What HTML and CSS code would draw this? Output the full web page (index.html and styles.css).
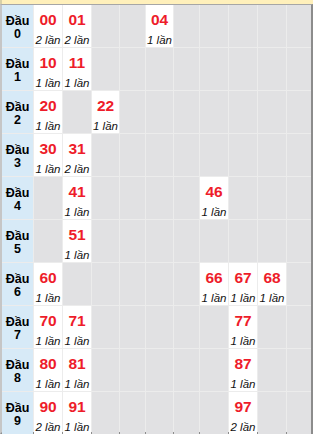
FILE: index.html
```html
<!DOCTYPE html>
<html lang="vi">
<head>
<meta charset="utf-8">
<title>Đầu lô</title>
<link rel="stylesheet" href="styles.css">
</head>
<body>
<div class="strip"></div>
<div class="board">
  <div class="h"><span>Đầu</span><span>0</span></div>
  <div class="c f"><b>00</b><i>2 lần</i></div><div class="c f"><b>01</b><i>2 lần</i></div><div class="c"></div><div class="c"></div><div class="c f"><b>04</b><i>1 lần</i></div><div class="c"></div><div class="c"></div><div class="c"></div><div class="c"></div><div class="c"></div>

  <div class="h"><span>Đầu</span><span>1</span></div>
  <div class="c f"><b>10</b><i>1 lần</i></div><div class="c f"><b>11</b><i>1 lần</i></div><div class="c"></div><div class="c"></div><div class="c"></div><div class="c"></div><div class="c"></div><div class="c"></div><div class="c"></div><div class="c"></div>

  <div class="h"><span>Đầu</span><span>2</span></div>
  <div class="c f"><b>20</b><i>1 lần</i></div><div class="c"></div><div class="c f"><b>22</b><i>1 lần</i></div><div class="c"></div><div class="c"></div><div class="c"></div><div class="c"></div><div class="c"></div><div class="c"></div><div class="c"></div>

  <div class="h"><span>Đầu</span><span>3</span></div>
  <div class="c f"><b>30</b><i>1 lần</i></div><div class="c f"><b>31</b><i>2 lần</i></div><div class="c"></div><div class="c"></div><div class="c"></div><div class="c"></div><div class="c"></div><div class="c"></div><div class="c"></div><div class="c"></div>

  <div class="h"><span>Đầu</span><span>4</span></div>
  <div class="c"></div><div class="c f"><b>41</b><i>1 lần</i></div><div class="c"></div><div class="c"></div><div class="c"></div><div class="c"></div><div class="c f"><b>46</b><i>1 lần</i></div><div class="c"></div><div class="c"></div><div class="c"></div>

  <div class="h"><span>Đầu</span><span>5</span></div>
  <div class="c"></div><div class="c f"><b>51</b><i>1 lần</i></div><div class="c"></div><div class="c"></div><div class="c"></div><div class="c"></div><div class="c"></div><div class="c"></div><div class="c"></div><div class="c"></div>

  <div class="h"><span>Đầu</span><span>6</span></div>
  <div class="c f"><b>60</b><i>1 lần</i></div><div class="c"></div><div class="c"></div><div class="c"></div><div class="c"></div><div class="c"></div><div class="c f"><b>66</b><i>1 lần</i></div><div class="c f"><b>67</b><i>1 lần</i></div><div class="c f"><b>68</b><i>1 lần</i></div><div class="c"></div>

  <div class="h"><span>Đầu</span><span>7</span></div>
  <div class="c f"><b>70</b><i>1 lần</i></div><div class="c f"><b>71</b><i>1 lần</i></div><div class="c"></div><div class="c"></div><div class="c"></div><div class="c"></div><div class="c"></div><div class="c f"><b>77</b><i>1 lần</i></div><div class="c"></div><div class="c"></div>

  <div class="h"><span>Đầu</span><span>8</span></div>
  <div class="c f"><b>80</b><i>1 lần</i></div><div class="c f"><b>81</b><i>1 lần</i></div><div class="c"></div><div class="c"></div><div class="c"></div><div class="c"></div><div class="c"></div><div class="c f"><b>87</b><i>1 lần</i></div><div class="c"></div><div class="c"></div>

  <div class="h"><span>Đầu</span><span>9</span></div>
  <div class="c f"><b>90</b><i>2 lần</i></div><div class="c f"><b>91</b><i>1 lần</i></div><div class="c"></div><div class="c"></div><div class="c"></div><div class="c"></div><div class="c"></div><div class="c f"><b>97</b><i>2 lần</i></div><div class="c"></div><div class="c"></div>
</div>
</body>
</html>
```

FILE: styles.css
```css
html, body {
  margin: 0;
  padding: 0;
  background: #ffffff;
}

body {
  font-family: "Liberation Sans", Arial, sans-serif;
}

.strip {
  width: 313px;
  height: 4px;
  background: #fff0bb;
  box-sizing: border-box;
  border-left: 2px solid #d8d0a8;
}

.board {
  width: 313px;
  height: 430px;
  box-sizing: border-box;
  border-top: 1px solid #a6a6a6;
  border-left: 2px solid #c6c6c6;
  border-right: 2px solid #8c8c8c;
  border-bottom: 2px solid #8c8c8c;
  display: grid;
  grid-template-columns: 31px 28px 28px 27px 25px 27px 25px 28px 28px 28px 24px;
  grid-template-rows: repeat(10, 1fr);
  gap: 1px;
  background: #ececec;
}

.h {
  background: #d7eaf7;
  color: #000;
  font-weight: bold;
  font-size: 12.5px;
  text-align: center;
  padding-top: 10px;
  box-sizing: border-box;
  display: flex;
  flex-direction: column;
  align-items: center;
}

.h span {
  display: block;
  line-height: 13px;
  height: 13px;
}

.c {
  background: #e1e1e3;
}

.c.f {
  background: #ffffff;
  display: flex;
  flex-direction: column;
  align-items: center;
  padding-top: 5px;
  gap: 4px;
  box-sizing: border-box;
}

.c b {
  display: block;
  color: #ee1c2a;
  font-weight: bold;
  font-size: 15.5px;
  line-height: 19px;
}

.c i {
  display: block;
  color: #111;
  font-style: italic;
  font-size: 11.5px;
  line-height: 14px;
  white-space: nowrap;
}
```
